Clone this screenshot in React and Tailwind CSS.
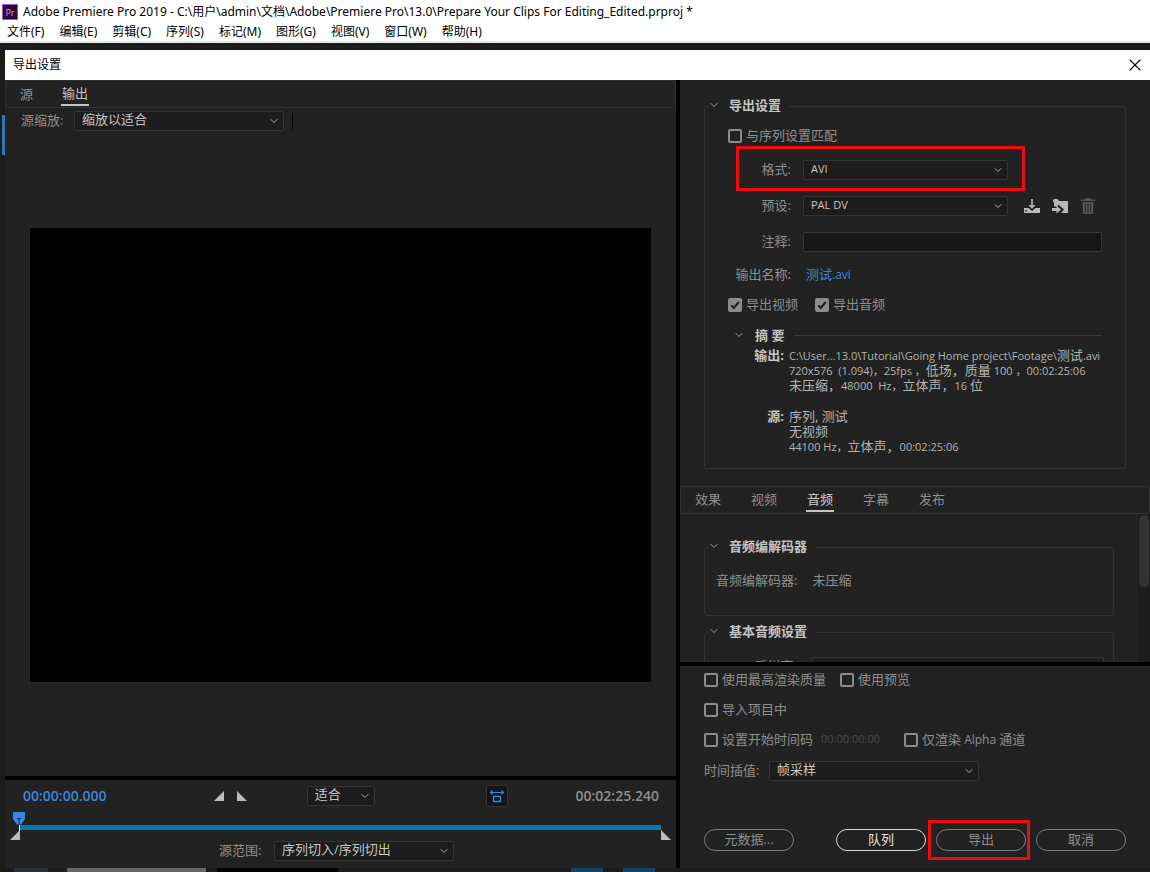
import { ChevronDown, X } from "lucide-react";

const menus = ["文件(F)", "编辑(E)", "剪辑(C)", "序列(S)", "标记(M)", "图形(G)", "视图(V)", "窗口(W)", "帮助(H)"];
const tabs = ["效果", "视频", "音频", "字幕", "发布"];

function Select({ id, value, className = "", label }) {
  return (
    <span className={"relative inline-flex h-5 shrink-0 " + className}>
      <select
        id={id}
        aria-label={label}
        defaultValue={value}
        className="h-full w-full appearance-none rounded-[2px] border border-[#343434] bg-[#1d1d1d] pr-6 pb-1 pl-[7px] leading-none text-[#c6c6c6] outline-none"
      >
        <option>{value}</option>
      </select>
      <ChevronDown className="pointer-events-none absolute top-1 right-1 size-3 text-[#a8a8a8]" strokeWidth={2} />
    </span>
  );
}

function Check({ label, checked = false, children }) {
  return (
    <label className="flex h-5 items-center gap-1">
      <span className="relative flex size-[14px] shrink-0">
        <input
          type="checkbox"
          defaultChecked={checked}
          className="peer size-full appearance-none rounded-[2px] border-2 border-[#8c8c8c] checked:bg-[#8c8c8c]"
        />
        <svg viewBox="0 0 14 14" className="pointer-events-none absolute inset-0 hidden size-full peer-checked:block">
          <path d="M3.3 7.4 5.8 10 10.8 4" fill="none" stroke="#1c1c1c" strokeWidth="2" />
        </svg>
      </span>
      <span className="pb-0.5 whitespace-nowrap">{label}</span>
      {children}
    </label>
  );
}

function Group({ title, className = "", children }) {
  return (
    <fieldset className={"min-w-0 rounded-[3px] border border-[#333333] " + className}>
      <legend className="ml-[3px] pr-2">
        <button type="button" className="flex h-5 items-center gap-[9px] pb-0.5 font-bold text-[#c4c4c4]">
          <ChevronDown className="size-3 text-[#9a9a9a]" strokeWidth={2} />
          {title}
        </button>
      </legend>
      {children}
    </fieldset>
  );
}

function PillButton({ children, primary = false }) {
  return (
    <button
      type="button"
      className={
        "h-[22px] w-[90px] rounded-full border pb-0.5 text-[13px] leading-none " +
        (primary ? "border-[#d8d8d8] text-[#e6e6e6]" : "border-[#7a7a7a] text-[#8e8e8e]")
      }
    >
      {children}
    </button>
  );
}

function SourcePreview() {
  return (
    <section className="flex min-h-0 flex-1 flex-col bg-[#222222]">
      <nav className="flex h-7 items-start gap-7 rounded-[3px] border border-[#303030] px-[14px]">
        <button type="button" className="h-[25px] text-[#8e8e8e]">源</button>
        <button type="button" className="h-[25px] border-b-2 border-[#c4c4c4] px-px text-[#c4c4c4]">输出</button>
      </nav>
      <div className="flex h-[26px] items-center gap-2 pl-4">
        <label htmlFor="scaling" className="w-[45px] pb-0.5 whitespace-nowrap text-[#8e8e8e]">源缩放:</label>
        <Select id="scaling" value="缩放以适合" className="w-[210px]" />
        <span className="h-4 w-px bg-black" />
      </div>
      <div className="flex min-h-0 flex-1 items-center px-[25px]">
        <div className="aspect-[621/454] w-full bg-black" />
      </div>
    </section>
  );
}

function Transport() {
  return (
    <section className="border-t-4 border-black bg-[#222222] pb-[7px]">
      <div className="grid h-8 grid-cols-[191fr_93fr_179fr_90fr_83fr] items-center pr-[17px] pl-[18px]">
        <span className="text-[14px] font-semibold text-[#3d87d6]">00:00:00.000</span>
        <span className="flex gap-[13px]">
          <button type="button" aria-label="设置入点">
            <svg viewBox="0 0 10 10" className="size-[10px]"><path d="M10 0V10H0Z" fill="#bcbcbc" /></svg>
          </button>
          <button type="button" aria-label="设置出点">
            <svg viewBox="0 0 10 10" className="size-[10px]"><path d="M0 0V10H10Z" fill="#bcbcbc" /></svg>
          </button>
        </span>
        <Select value="适合" label="缩放级别" className="w-[68px]" />
        <button type="button" aria-label="长宽比校正" className="size-[22px] rounded-[2px] border border-[#3a332d] bg-[#131619]">
          <svg viewBox="0 0 20 20" className="size-5" fill="none" stroke="#3d87d6">
            <path d="M4 6.5H16" />
            <path d="M5.5 4 2.5 6.5 5.5 9ZM14.5 4 17.5 6.5 14.5 9Z" fill="#3d87d6" stroke="none" />
            <path d="M6.5 10.5H13.5V15.5H6.5Z" strokeWidth="1.4" />
          </svg>
        </button>
        <span className="text-[14px] font-semibold text-[#8e8e8e]">00:02:25.240</span>
      </div>
      <div className="relative mr-[15px] ml-[15px] pt-[13px] pb-[11px]">
        <div className="h-[5px] bg-[#0a77b5]" />
        <input type="range" aria-label="播放位置" defaultValue="0" className="absolute inset-x-0 top-2 h-4 w-full opacity-0" />
        <svg viewBox="0 0 22 30" className="pointer-events-none absolute top-0 -left-3 h-[30px] w-[22px]">
          <path d="M5 -1H17V7L13 12.500H9L5 7Z" fill="#3486e0" />
          <path d="M9 6.500H13M11 6.500V13" stroke="#10253d" fill="none" />
          <path d="M11.500 13V19" stroke="#ffffff" />
          <path d="M12 18V28H2Z" fill="#bcbcbc" />
        </svg>
        <svg viewBox="0 0 10 10" className="pointer-events-none absolute top-[18px] -right-[10px] size-[10px]">
          <path d="M0 0V10H10Z" fill="#bcbcbc" />
        </svg>
      </div>
      <div className="flex h-5 items-center justify-center gap-[10px] pr-2">
        <label htmlFor="range" className="w-[45px] pb-0.5 whitespace-nowrap text-[#8e8e8e]">源范围:</label>
        <Select id="range" value="序列切入/序列切出" className="w-[180px]" />
      </div>
    </section>
  );
}

function ExportSettings() {
  return (
    <section className="px-6 pt-4 pb-[17px]">
      <Group title="导出设置" className="pr-[23px] pb-[14px]">
        <div className="pt-[10px] pl-[23px]">
          <Check label="与序列设置匹配" />
        </div>
        <div className="relative mt-[14px] flex h-5 items-center gap-3">
          <label htmlFor="format" className="w-[86px] pb-0.5 text-right">格式:</label>
          <Select id="format" value="AVI" className="w-[205px] text-[11px]" />
          <span className="pointer-events-none absolute -top-[14px] left-[31px] h-[45px] w-[289px] border-[3px] border-[#f20a0a]" />
        </div>
        <div className="mt-4 flex h-5 items-center gap-3">
          <label htmlFor="preset" className="w-[86px] pb-0.5 text-right">预设:</label>
          <Select id="preset" value="PAL DV" className="w-[205px] text-[11px]" />
          <span className="ml-1 flex gap-3 text-[#b8b8b8]">
            <button type="button" aria-label="保存预设">
              <svg viewBox="0 0 16 16" className="size-4" fill="currentColor">
                <path d="M7.200 1H8.800V7H11.500L8 10.800 4.500 7H7.200Z" />
                <path d="M0 10H4.500L8 13 11.500 10H16V15H0ZM1.500 12V13.500H3V12Z" fillRule="evenodd" />
              </svg>
            </button>
            <button type="button" aria-label="导入预设">
              <svg viewBox="0 0 16 16" className="size-4" fill="currentColor">
                <path d="M1 2.500 2 1H5.500L7 3H16V15H9L12 11.500 6 6.300V8.500H2V4H1Z" />
                <path d="M0 10H4.500V7.800L9 11.500 4.500 15.500V13H0Z" />
              </svg>
            </button>
            <button type="button" aria-label="删除预设" className="text-[#555555]">
              <svg viewBox="0 0 16 16" className="size-4" fill="currentColor">
                <path d="M5.500 0H10.500V1.500H15V3H1V1.500H5.500Z" />
                <path d="M2.300 4H13.700L12.800 16H3.200Z" />
                <path d="M5.200 5.500 5.600 14.500M8 5.500V14.500M10.800 5.500 10.400 14.500" stroke="#222222" strokeWidth="0.800" />
              </svg>
            </button>
          </span>
        </div>
        <div className="mt-4 flex h-5 items-center gap-3">
          <label htmlFor="comment" className="w-[86px] pb-0.5 text-right">注释:</label>
          <input id="comment" type="text" className="h-5 min-w-0 flex-1 rounded-[2px] border border-[#343434] bg-[#171717] px-2 text-[#c6c6c6]" />
        </div>
        <div className="mt-3 flex h-5 items-center gap-[15px]">
          <span className="w-[86px] text-right">输出名称:</span>
          <a href="#output" className="text-[#3d87d6]">测试<span className="text-[12px]">.avi</span></a>
        </div>
        <div className="mt-[11px] flex gap-[17px] pl-[23px]">
          <Check label="导出视频" checked />
          <Check label="导出音频" checked />
        </div>
        <div className="mt-[10px] flex h-5 items-center gap-[10px] pl-7">
          <button type="button" className="flex items-center gap-[10px] font-bold whitespace-pre text-[#c4c4c4]">
            <ChevronDown className="size-3 text-[#9a9a9a]" strokeWidth={2} />
            摘 要
          </button>
          <span className="h-px flex-1 bg-[#3a3a3a]" />
        </div>
        <dl className="mt-[3px] grid grid-cols-[79px_1fr] gap-x-[5px] gap-y-4 text-[13px] leading-[15px] whitespace-nowrap text-[#b4b4b4]">
          <dt className="text-right font-bold text-[#c4c4c4]">输出:</dt>
          <dd>
            <p className="h-[15px]"><span className="text-[11px]">C:\User...13.0\Tutorial\Going Home project\Footage\</span>测试<span className="text-[11px]">.avi</span></p>
            <p className="h-[15px]"><span className="text-[11px]">720x576&nbsp; (1.094)，25fps ，</span>低场，质量<span className="text-[11px]"> 100 ，00:02:25:06</span></p>
            <p className="h-[15px]">未压缩，<span className="text-[11px]">48000&nbsp; Hz，</span>立体声，<span className="text-[11px]">16 </span>位</p>
          </dd>
          <dt className="text-right font-bold text-[#c4c4c4]">源:</dt>
          <dd>
            <p className="h-[15px]">序列, 测试</p>
            <p className="h-[15px]">无视频</p>
            <p className="h-[15px]"><span className="text-[11px]">44100 Hz，</span>立体声，<span className="text-[11px]">00:02:25:06</span></p>
          </dd>
        </dl>
      </Group>
    </section>
  );
}

function AudioSettings() {
  return (
    <section className="flex min-h-0 flex-1 flex-col">
      <nav className="flex h-7 shrink-0 items-start gap-7 rounded-[3px] border border-[#333333] px-[13px]">
        {tabs.map((tab) => (
          <button
            key={tab}
            type="button"
            className={"h-[25px] border-b-2 px-px pt-px " + (tab === "音频" ? "border-[#c4c4c4] text-[#d0d0d0]" : "border-transparent")}
          >
            {tab}
          </button>
        ))}
      </nav>
      <div className="flex min-h-0 flex-1 overflow-hidden">
        <div className="flex-1 pt-[23px] pr-6 pl-6">
          <Group title="音频编解码器" className="pb-[25px]">
            <p className="flex h-[33px] items-end gap-[15px] pl-[11px]">
              <span>音频编解码器:</span>
              <span>未压缩</span>
            </p>
          </Group>
          <Group title="基本音频设置" className="mt-[6px]">
            <div className="flex items-center gap-[14px] pt-[14px] pr-[9px]">
              <label htmlFor="rate" className="w-[92px] pb-0.5 text-right">采样率:</label>
              <Select id="rate" value="48000 Hz" className="flex-1 text-[11px]" />
            </div>
          </Group>
        </div>
        <div className="w-3 bg-[#1d1d1d] pt-px">
          <div className="mx-px h-[72px] rounded-full bg-[#333333]" />
        </div>
      </div>
    </section>
  );
}

function Footer() {
  return (
    <section className="border-t-4 border-black px-6 pt-1 pb-[17px]">
      <div className="flex gap-[14px]">
        <Check label="使用最高渲染质量" />
        <Check label="使用预览" />
      </div>
      <div className="mt-[10px] flex">
        <Check label="导入项目中" />
      </div>
      <div className="mt-[10px] flex gap-6">
        <Check label="设置开始时间码">
          <span className="ml-1 pb-0.5 text-[11px] text-[#464646]">00:00:00:00</span>
        </Check>
        <Check label={<>仅渲染<span className="text-[12px]"> Alpha </span>通道</>} />
      </div>
      <div className="mt-[11px] flex h-5 items-center gap-2">
        <label htmlFor="interp" className="w-[57px] pb-0.5 whitespace-nowrap">时间插值:</label>
        <Select id="interp" value="帧采样" className="w-[210px]" />
      </div>
      <div className="mt-12 flex gap-[10px]">
        <span className="mr-auto flex"><PillButton>元数据...</PillButton></span>
        <PillButton primary>队列</PillButton>
        <span className="relative flex">
          <PillButton>导出</PillButton>
          <span className="pointer-events-none absolute -top-[9px] -left-2 h-10 w-[102px] border-[3px] border-[#f20a0a]" />
        </span>
        <PillButton>取消</PillButton>
      </div>
    </section>
  );
}

export default function App() {
  return (
    <div className="flex h-screen min-h-[800px] min-w-[1000px] flex-col overflow-hidden bg-[#1b1b1b] font-['Open_Sans','Noto_Sans_CJK_SC',sans-serif] text-[13px] leading-5">
      <header className="border-b-2 border-[#e8e8e8] bg-white pt-px font-['Noto_Sans','Noto_Sans_CJK_SC',sans-serif] text-[12px] text-black">
        <h1 className="flex h-[22px] items-center gap-[5px] pl-[2px] whitespace-nowrap">
          <span className="flex size-4 items-center justify-center border border-[#b04fd0] bg-[#2a0634] text-[9px] leading-none text-[#e08cf8]">Pr</span>
          Adobe Premiere Pro 2019 - C:\用户\admin\文档\Adobe\Premiere Pro\13.0\Prepare Your Clips For Editing_Edited.prproj *
        </h1>
        <nav className="flex h-[18px] items-center gap-[15px] pl-[7px]">
          {menus.map((m) => <button key={m} type="button" className="whitespace-nowrap">{m}</button>)}
        </nav>
      </header>
      <div className="flex min-h-0 flex-1 pt-[7px]">
        <div className="w-[5px] shrink-0 pt-[65px] pl-[2px]">
          <div className="h-10 bg-[#2f77bd]" />
        </div>
        <main className="flex min-w-0 flex-1 flex-col">
          <header className="flex h-[30px] shrink-0 items-center justify-between bg-white pr-[5px] pl-2 text-[12px] text-black">
            <h2>导出设置</h2>
            <button type="button" aria-label="关闭"><X className="size-5" strokeWidth={1.3} /></button>
          </header>
          <div className="flex min-h-0 flex-1">
            <div className="flex min-w-0 flex-1 flex-col">
              <SourcePreview />
              <Transport />
            </div>
            <div className="flex w-[474px] shrink-0 flex-col border-l-4 border-black bg-[#222222] text-[#8e8e8e]">
              <ExportSettings />
              <AudioSettings />
              <Footer />
            </div>
          </div>
        </main>
      </div>
      <div className="flex h-1 shrink-0">
        <span className="ml-[14px] w-[34px] bg-[#24323f]" />
        <span className="ml-[19px] w-[139px] bg-[#666666]" />
        <span className="ml-[11px] w-[121px] bg-black" />
        <span className="ml-[233px] w-8 bg-[#0f4468]" />
        <span className="ml-5 w-8 bg-[#0f4468]" />
      </div>
    </div>
  );
}
